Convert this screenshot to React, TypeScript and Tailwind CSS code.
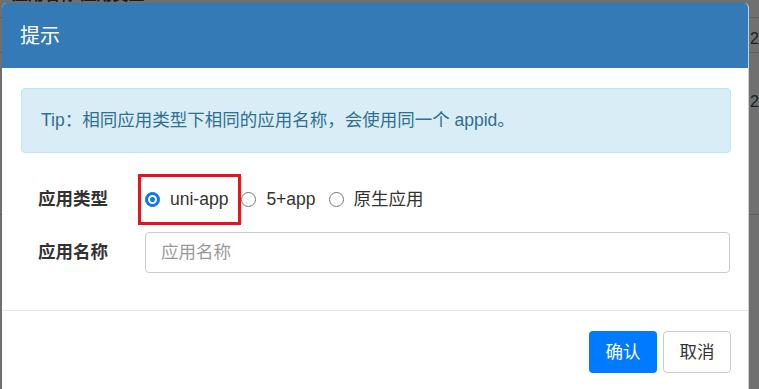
import React, { useState } from "react";

const font = "font-['Liberation_Sans','Noto_Sans_CJK_SC',sans-serif]";

const Radio = ({ checked }: { checked: boolean }) => (
  <span
    className={`flex h-[15px] w-[15px] shrink-0 items-center justify-center rounded-full border ${
      checked ? "border-[#0b76f5] bg-[#0b76f5]" : "border-[#767676] bg-white"
    }`}
  >
    {checked && <span className="block h-[9px] w-[9px] rounded-full border-[2px] border-white bg-[#0b76f5]" />}
  </span>
);

const App: React.FC = () => {
  const [type, setType] = useState("uni-app");

  const options = ["uni-app", "5+app", "原生应用"];

  return (
    <div className={`relative h-[389px] w-[759px] overflow-hidden bg-[#707070] ${font}`}>
      {/* page behind the backdrop */}
      <div className="flex h-full">
        <div className="flex flex-1 flex-col text-[16px] text-[#1c1c1c]">
          <div className="h-[18px] border-b border-[#5e5e5e]">
            <span className="-mt-[13px] block pl-[12px] font-bold leading-none">应用名称 应用类型</span>
          </div>
          <div className="h-[35px] border-b border-[#5e5e5e] pl-[750px] pt-[13px] leading-none">27</div>
          <div className="h-[162px] border-b border-[#5e5e5e] pl-[750px] pt-[41px] leading-none">27</div>
        </div>
        <div className="w-[2px] bg-[#5a5a5a]" />
      </div>

      {/* modal */}
      <div className="absolute left-[2px] top-[3px] w-[747px] overflow-hidden rounded-t-[5px] border-r border-[#cfcfcf] bg-white">
        <div className="flex h-[65px] items-center bg-[#337ab7] px-[18px]">
          <h4 className="text-[20px] font-normal text-white">提示</h4>
        </div>

        <div className="pb-[37px] pl-[19px] pr-[17px] pt-[20px]">
          <div className="flex h-[65px] items-center rounded-[4px] border border-[#bce8f1] bg-[#d9edf7] px-[19px] text-[17.5px] text-[#31708f]">
            Tip：相同应用类型下相同的应用名称，会使用同一个 appid。
          </div>

          <div className="mt-[25px] flex flex-col gap-[12px] pl-[17px] pr-[1px] text-[17.5px]">
            <div className="flex h-[42px] items-center">
              <label className="w-[107px] shrink-0 font-bold text-[#333]">应用类型</label>
              <div className="flex items-center text-[#333]">
                {options.map((o, i) => (
                  <button
                    key={o}
                    onClick={() => setType(o)}
                    className={`relative flex items-center gap-[10px] ${i > 0 ? "ml-[13px]" : ""}`}
                  >
                    <Radio checked={type === o} />
                    <span>{o}</span>
                    {i === 0 && (
                      <span className="pointer-events-none absolute -bottom-[13px] -left-[7px] -right-[13px] -top-[12px] border-[3px] border-[#e8141c]" />
                    )}
                  </button>
                ))}
              </div>
            </div>

            <div className="flex items-center">
              <label className="w-[107px] shrink-0 font-bold text-[#333]">应用名称</label>
              <input
                placeholder="应用名称"
                className="h-[41px] flex-1 rounded-[4px] border border-[#cccccc] px-[15px] text-[17.5px] text-[#555] outline-none placeholder:text-[#9a9a9a]"
              />
            </div>
          </div>
        </div>

        <div className="flex justify-end gap-[6px] border-t border-[#e5e5e5] px-[17px] py-[20px]">
          <button className="h-[42px] w-[68px] rounded-[4px] bg-[#007bff] text-[17.5px] text-white">确认</button>
          <button className="h-[42px] w-[68px] rounded-[4px] border border-[#cccccc] bg-white text-[17.5px] text-[#333]">
            取消
          </button>
        </div>
      </div>
    </div>
  );
};

export default App;
